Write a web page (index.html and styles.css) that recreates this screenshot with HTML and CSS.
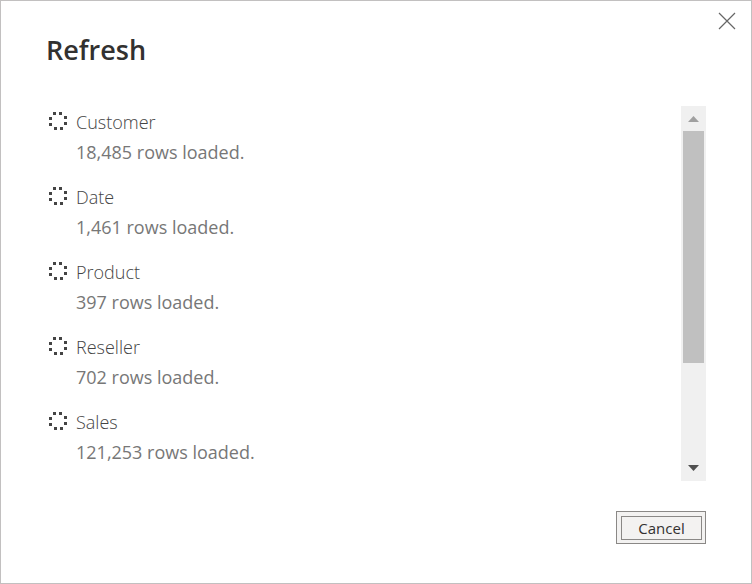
FILE: index.html
```html
<!DOCTYPE html>
<html lang="en">
<head>
<meta charset="utf-8">
<title>Refresh</title>
<link rel="stylesheet" href="styles.css">
</head>
<body>
<svg class="defs" aria-hidden="true">
  <symbol id="spinner" viewBox="0 0 20 20">
    <path d="M5 1h3v3h-3zM11 1h3v3h-3zM1 6h3v3h-3zM16 5h3v3h-3zM1 12h3v3h-3zM16 11h3v3h-3zM6 16h3v3h-3zM12 16h3v3h-3z"/>
  </symbol>
</svg>
<main class="dialog" role="dialog" aria-labelledby="title">
  <button class="close" type="button" aria-label="Close">
    <svg width="18" height="18" viewBox="0 0 18 18"><path d="M1 1L17 17M17 1L1 17"/></svg>
  </button>
  <h1 class="title" id="title">Refresh</h1>
  <div class="panel">
    <ul class="tables">
      <li class="item"><svg class="spinner"><use href="#spinner"/></svg><div><p class="name">Customer</p><p class="status">18,485 rows loaded.</p></div></li>
      <li class="item"><svg class="spinner"><use href="#spinner"/></svg><div><p class="name">Date</p><p class="status">1,461 rows loaded.</p></div></li>
      <li class="item"><svg class="spinner"><use href="#spinner"/></svg><div><p class="name">Product</p><p class="status">397 rows loaded.</p></div></li>
      <li class="item"><svg class="spinner"><use href="#spinner"/></svg><div><p class="name">Reseller</p><p class="status">702 rows loaded.</p></div></li>
      <li class="item"><svg class="spinner"><use href="#spinner"/></svg><div><p class="name">Sales</p><p class="status">121,253 rows loaded.</p></div></li>
    </ul>
    <div class="scrollbar">
      <button class="arrow arrow-up" type="button" aria-label="Scroll up">
        <svg width="11" height="6" viewBox="0 0 11 6"><path d="M0 6L5.5 0L11 6z"/></svg>
      </button>
      <div class="track"><div class="thumb"></div></div>
      <button class="arrow arrow-down" type="button" aria-label="Scroll down">
        <svg width="11" height="6" viewBox="0 0 11 6"><path d="M0 0H11L5.5 6z"/></svg>
      </button>
    </div>
  </div>
  <footer class="footer">
    <button class="cancel" type="button"><span class="cancel-label">Cancel</span></button>
  </footer>
</main>
</body>
</html>
```
FILE: styles.css
```css
* {
  box-sizing: border-box;
}

body {
  margin: 0;
  font-family: "Open Sans", "Noto Sans", sans-serif;
  background: #fff;
}

.defs {
  position: absolute;
  width: 0;
  height: 0;
}

.dialog {
  position: relative;
  min-height: 100vh;
  padding: 29px 45px 24px;
  border: 1px solid #c2c0c0;
}

button {
  margin: 0;
  padding: 0;
  border: 0;
  background: none;
  font-family: inherit;
}

.close {
  position: absolute;
  top: 11px;
  right: 15px;
  display: flex;
}

.close path {
  fill: none;
  stroke: #666;
  stroke-width: 1.2;
}

.title {
  margin: 0;
  color: #323130;
  font-size: 27px;
  font-weight: 600;
  line-height: 40px;
}

.panel {
  display: flex;
  margin-top: 36px;
}

.tables {
  flex: 1;
  margin: 0;
  padding: 0 0 0 2px;
  list-style: none;
}

.item {
  display: flex;
  gap: 8px;
  height: 75px;
}

.spinner {
  width: 20px;
  height: 20px;
  margin-top: 5px;
  fill: #444;
}

.name,
.status {
  margin: 0;
  font-size: 18px;
  line-height: 30px;
}

.name {
  padding-top: 1px;
  color: #444;
  font-weight: 300;
}

.status {
  color: #777;
}

.scrollbar {
  display: flex;
  flex-direction: column;
  width: 25px;
  background: #f0f0f0;
}

.arrow {
  display: flex;
  align-items: center;
  justify-content: center;
  height: 25px;
}

.arrow-up {
  fill: #a0a0a0;
}

.arrow-down {
  padding-bottom: 2px;
  fill: #505050;
}

.track {
  flex: 1;
  padding: 0 2px;
}

.thumb {
  height: 232px;
  background: #c0c0c0;
}

.footer {
  display: flex;
  justify-content: flex-end;
  margin-top: 30px;
}

.cancel {
  width: 90px;
  padding: 4px 3px 3px 4px;
  border: 1px solid #8a8886;
  background: #f3f2f1;
  color: #323130;
  font-size: 15px;
  line-height: 22px;
}

.cancel-label {
  display: block;
  border: 1px solid #8a8886;
}
```
